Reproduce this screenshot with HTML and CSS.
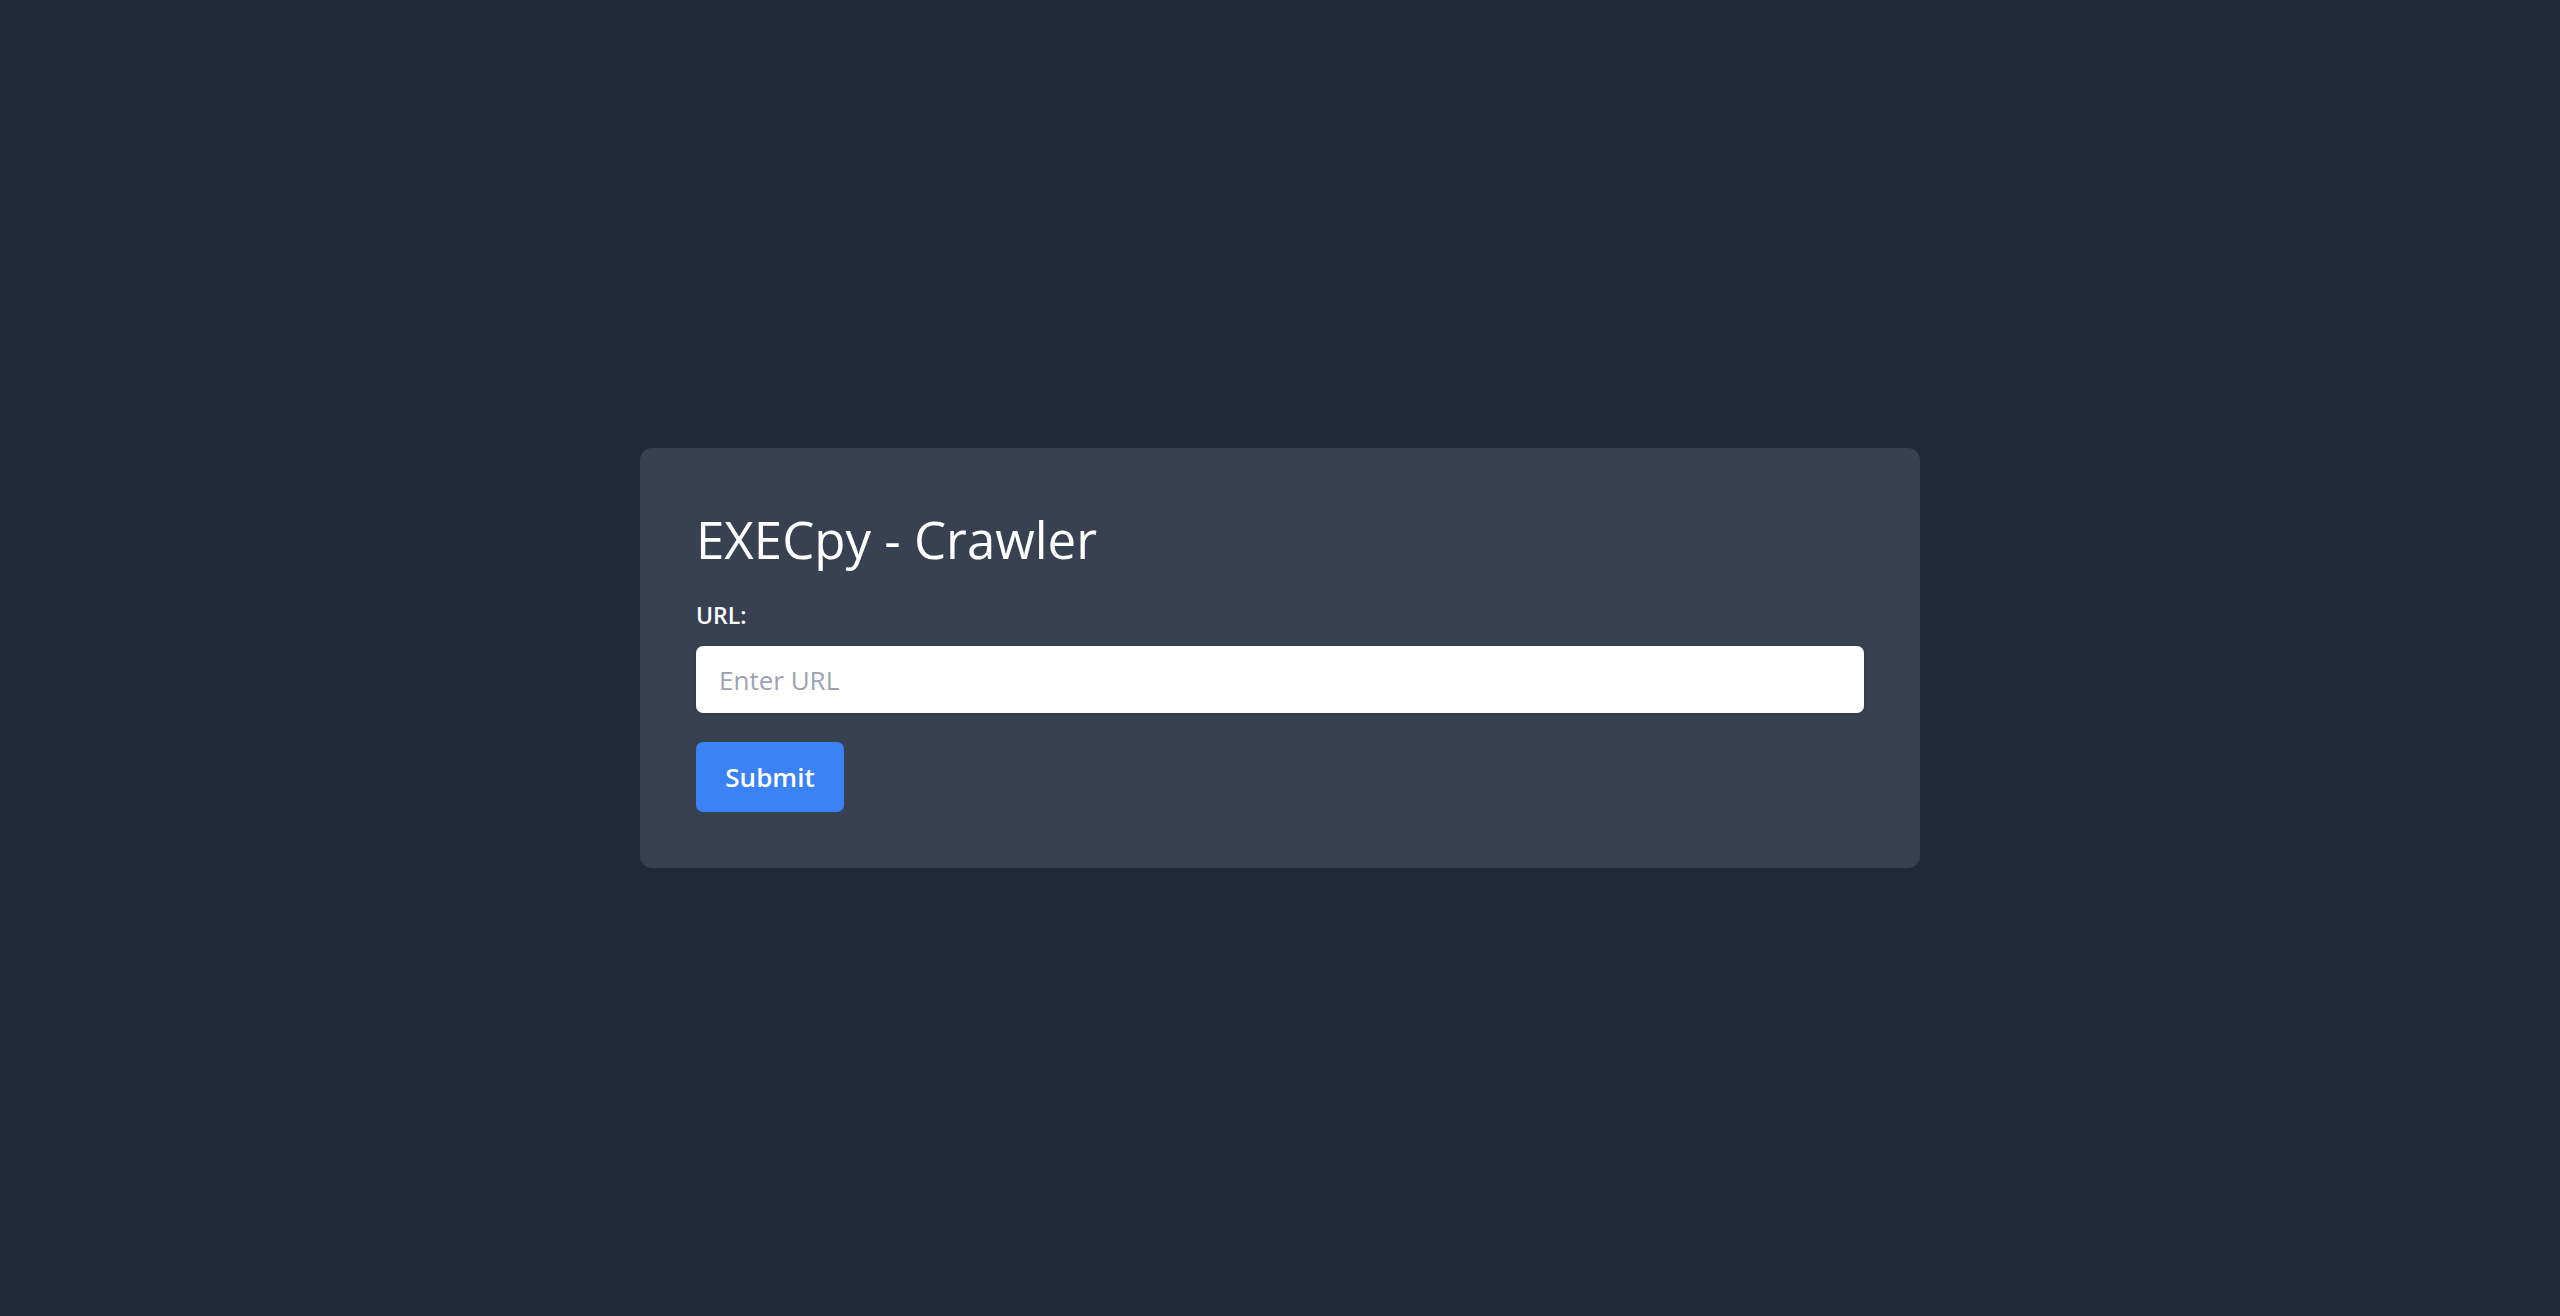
FILE: index.html
```html
<!DOCTYPE html>
<html lang="en">
<head>
<meta charset="utf-8">
<title>EXECpy - Crawler</title>
<link rel="stylesheet" href="styles.css">
</head>
<body>
<main class="page">
  <form class="card" onsubmit="return false;">
    <h1 class="title">EXECpy - Crawler</h1>
    <label class="label" for="url">URL:</label>
    <input class="input" id="url" type="text" placeholder="Enter URL">
    <button class="btn" type="submit">Submit</button>
  </form>
</main>
</body>
</html>
```

FILE: styles.css
```css
* { box-sizing: border-box; }
html, body { margin: 0; padding: 0; }
body {
  background: #1f2937;
  font-family: "Open Sans", "Noto Sans", sans-serif;
  color: #ffffff;
}
.page {
  min-height: 100vh;
  display: flex;
  align-items: center;
  justify-content: center;
}
.card {
  width: 1280px;
  background: #374151;
  border-radius: 12px;
  padding: 56px;
  display: flex;
  flex-direction: column;
  align-items: flex-start;
}
.title {
  margin: 0;
  font-size: 51px;
  font-weight: 400;
  line-height: 70px;
  height: 70px;
  margin-bottom: 27px;
  letter-spacing: 0;
}
.label {
  font-size: 23px;
  font-weight: 600;
  line-height: 28px;
  margin-bottom: 17px;
}
.input {
  width: 100%;
  height: 67px;
  border: none;
  border-radius: 7px;
  background: #ffffff;
  padding: 0 23px;
  font-family: inherit;
  font-size: 26px;
  color: #111827;
  box-shadow: 0 1px 3px rgba(0,0,0,0.15);
  outline: none;
  margin-bottom: 29px;
}
.input::placeholder { color: #9ca3af; }
.btn {
  width: 148px;
  height: 70px;
  border: none;
  border-radius: 7px;
  background: #3b82f6;
  color: #ffffff;
  font-family: inherit;
  font-size: 26px;
  font-weight: 600;
  padding: 0;
  cursor: pointer;
}
```
